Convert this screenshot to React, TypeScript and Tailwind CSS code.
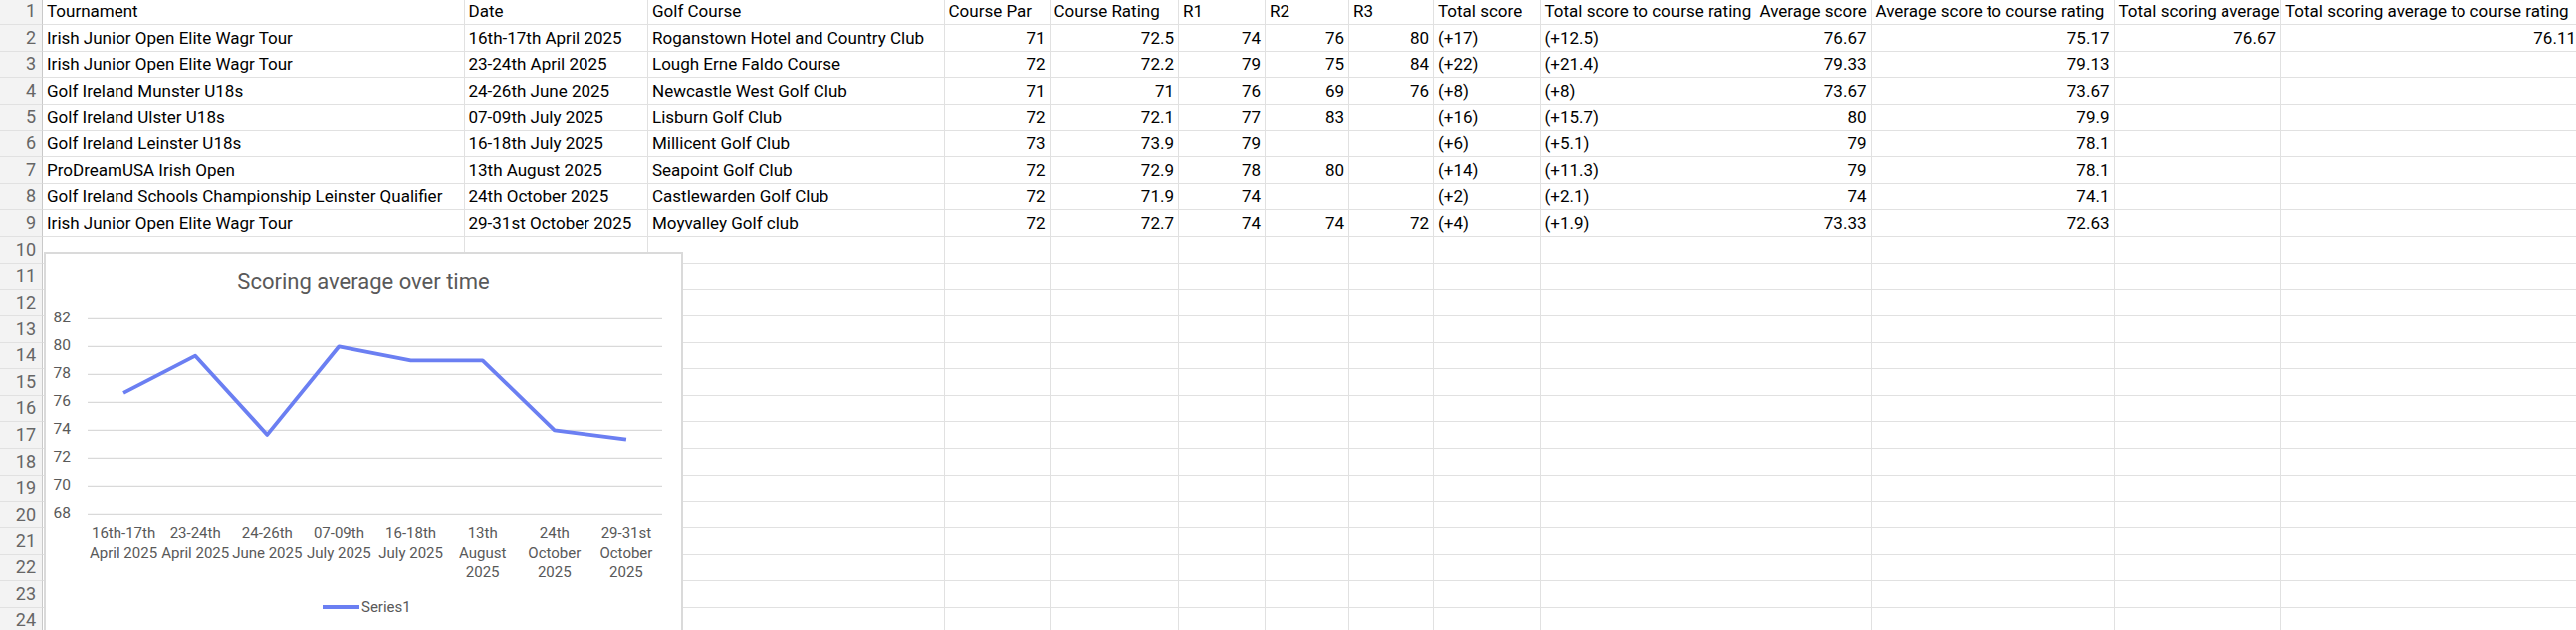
const COLS =
  "grid grid-cols-[43px_423.5px_184.5px_297.5px_106px_129.5px_87px_84px_85px_107.5px_216px_116px_244px_167.5px_301px]";

const FONT = "font-['Roboto','Liberation_Sans',sans-serif]";

const headers = [
  "Tournament",
  "Date",
  "Golf Course",
  "Course Par",
  "Course Rating",
  "R1",
  "R2",
  "R3",
  "Total score",
  "Total score to course rating",
  "Average score",
  "Average score to course rating",
  "Total scoring average",
  "Total scoring average to course rating",
];

const rows: string[][] = [
  ["Irish Junior Open Elite Wagr Tour", "16th-17th April 2025", "Roganstown Hotel and Country Club", "71", "72.5", "74", "76", "80", "(+17)", "(+12.5)", "76.67", "75.17", "76.67", "76.11"],
  ["Irish Junior Open Elite Wagr Tour", "23-24th April 2025", "Lough Erne Faldo Course", "72", "72.2", "79", "75", "84", "(+22)", "(+21.4)", "79.33", "79.13", "", ""],
  ["Golf Ireland Munster U18s", "24-26th June 2025", "Newcastle West Golf Club", "71", "71", "76", "69", "76", "(+8)", "(+8)", "73.67", "73.67", "", ""],
  ["Golf Ireland Ulster U18s", "07-09th July 2025", "Lisburn Golf Club", "72", "72.1", "77", "83", "", "(+16)", "(+15.7)", "80", "79.9", "", ""],
  ["Golf Ireland Leinster U18s", "16-18th July 2025", "Millicent Golf Club", "73", "73.9", "79", "", "", "(+6)", "(+5.1)", "79", "78.1", "", ""],
  ["ProDreamUSA Irish Open", "13th August 2025", "Seapoint Golf Club", "72", "72.9", "78", "80", "", "(+14)", "(+11.3)", "79", "78.1", "", ""],
  ["Golf Ireland Schools Championship Leinster Qualifier", "24th October 2025", "Castlewarden Golf Club", "72", "71.9", "74", "", "", "(+2)", "(+2.1)", "74", "74.1", "", ""],
  ["Irish Junior Open Elite Wagr Tour", "29-31st October 2025", "Moyvalley Golf club", "72", "72.7", "74", "74", "72", "(+4)", "(+1.9)", "73.33", "72.63", "", ""],
];

const leftCols = [0, 1, 2, 8, 9];

const points = [76.67, 79.33, 73.67, 80, 79, 79, 74, 73.33];
const xLabels = [
  ["16th-17th", "April 2025"],
  ["23-24th", "April 2025"],
  ["24-26th", "June 2025"],
  ["07-09th", "July 2025"],
  ["16-18th", "July 2025"],
  ["13th", "August", "2025"],
  ["24th", "October", "2025"],
  ["29-31st", "October", "2025"],
];

const yOf = (v: number) => 516.3 - (v - 68) * 14;
const xOf = (i: number) => 88 + 72.125 * (i + 0.5);

function Row({ n, cells, first }: { n: number; cells: string[]; first?: boolean }) {
  return (
    <div className={`${COLS} ${first ? "h-[25px]" : "h-[26.64px]"}`}>
      <div className="flex items-end justify-end border-b border-r border-b-[#e1e1e1] border-r-[#c9c9c9] bg-[#f3f3f3] pb-[4px] pr-[6px] text-[18px] leading-none text-[#666666]">
        {n}
      </div>
      {Array.from({ length: 14 }).map((_, i) => {
        const v = cells[i] ?? "";
        const left = first || leftCols.includes(i);
        return (
          <div
            key={i}
            className={`flex items-end whitespace-nowrap border-b border-r border-[#e1e1e1] px-[4px] pb-[4px] leading-none ${
              left ? "justify-start" : "justify-end"
            }`}
          >
            {v}
          </div>
        );
      })}
    </div>
  );
}

function Chart() {
  const line = points.map((p, i) => `${xOf(i)},${yOf(p)}`).join(" ");
  return (
    <div className="absolute left-[44px] top-[253px] h-[400px] w-[642px] border-2 border-[#dadada] bg-white">
      <div className="pt-[14px] text-center text-[22px] leading-[28px] text-[#595959]">
        Scoring average over time
      </div>
      <svg
        className="absolute left-0 top-0"
        width={638}
        height={396}
        viewBox="46 255 638 396"
        fontFamily="'Roboto','Liberation Sans',sans-serif"
      >
        {[68, 70, 72, 74, 76, 78, 80, 82].map((v) => (
          <g key={v}>
            <line x1={88} x2={665} y1={yOf(v)} y2={yOf(v)} stroke="#d9d9d9" strokeWidth={1.3} />
            <text x={71} y={yOf(v)} textAnchor="end" dominantBaseline="middle" fontSize={15.5} fill="#595959">
              {v}
            </text>
          </g>
        ))}
        <polyline points={line} fill="none" stroke="#6b7ff2" strokeWidth={3.8} strokeLinejoin="round" />
        {xLabels.map((lines, i) => (
          <text key={i} x={xOf(i)} textAnchor="middle" fontSize={15} fill="#595959">
            {lines.map((l, j) => (
              <tspan key={j} x={xOf(i)} y={541 + j * 19.5}>
                {l}
              </tspan>
            ))}
          </text>
        ))}
        <line x1={324} x2={361} y1={610} y2={610} stroke="#6b7ff2" strokeWidth={3.8} />
        <text x={363} y={615} fontSize={15} fill="#595959">
          Series1
        </text>
      </svg>
    </div>
  );
}

export default function App() {
  return (
    <div className={`relative h-[633px] w-[2587px] overflow-hidden bg-white text-[17px] text-black ${FONT}`}>
      <Row n={1} cells={headers} first />
      {Array.from({ length: 23 }).map((_, i) => (
        <Row key={i} n={i + 2} cells={rows[i] ?? []} />
      ))}
      <Chart />
    </div>
  );
}
